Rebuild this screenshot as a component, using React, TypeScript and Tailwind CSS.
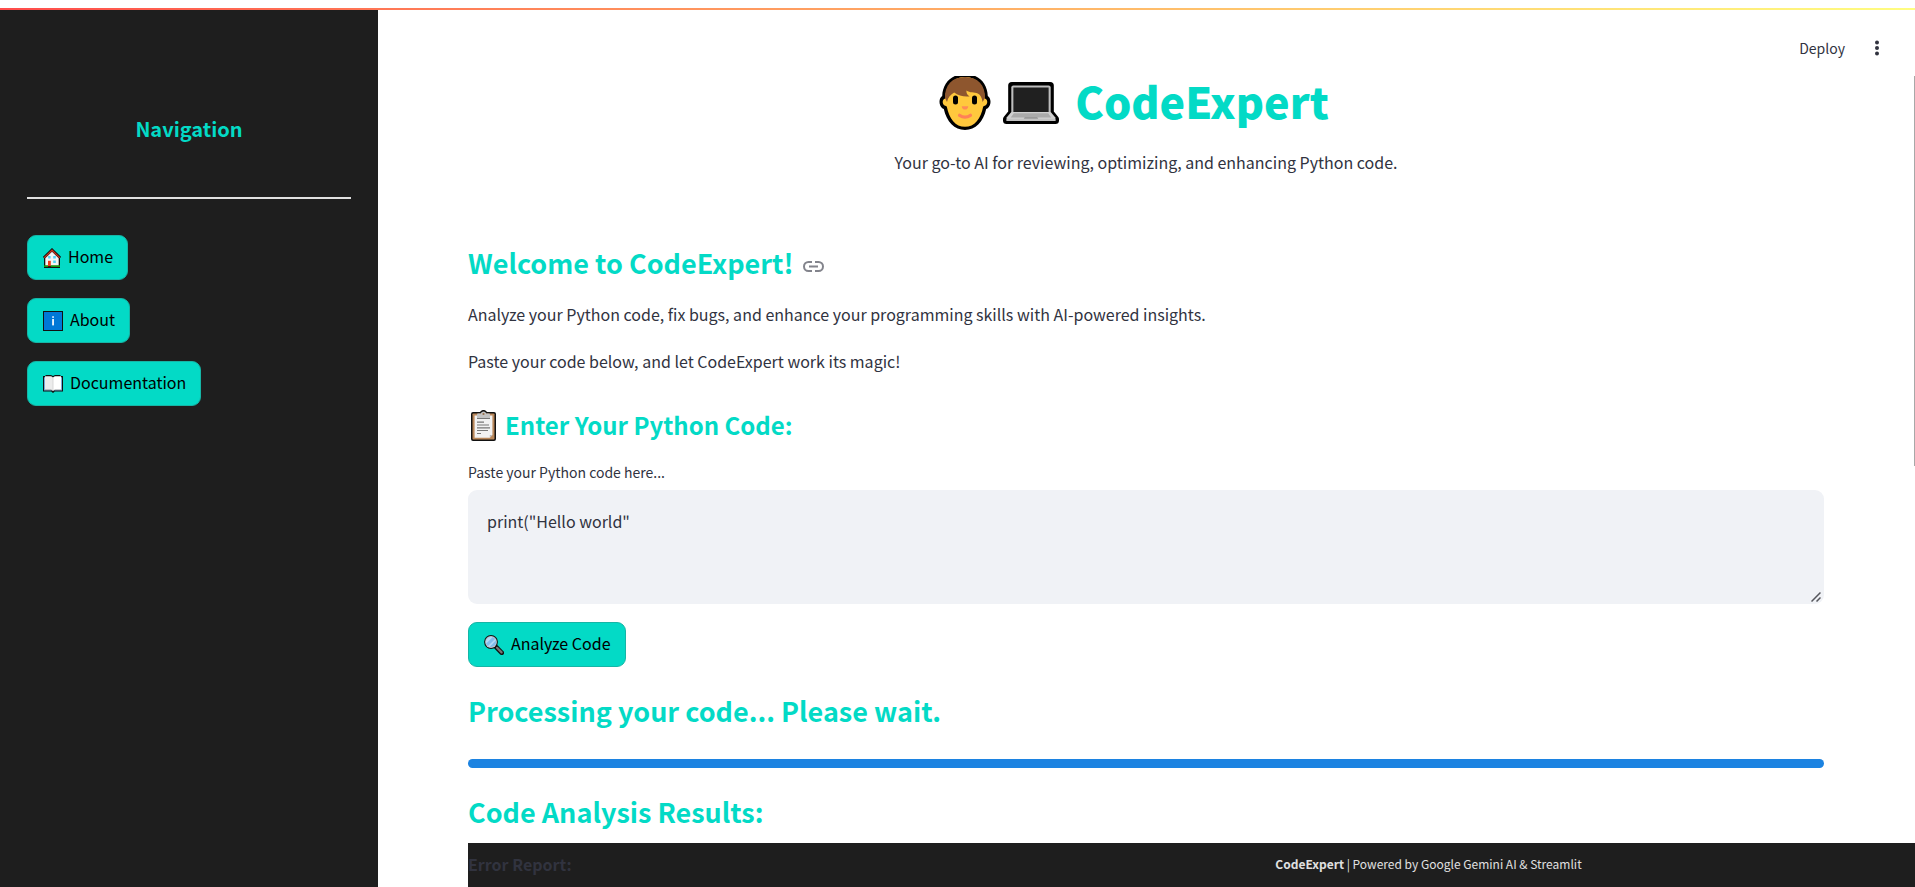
import React from "react";

const HomeIcon = () => (
  <svg viewBox="0 0 18 20" className="h-5 w-[18px] shrink-0" aria-hidden="true">
    <path d="M1 9.2V20h16V9.2L9 1.5z" fill="#111" />
    <path d="M1 10 9 2.2 17 10" fill="none" stroke="#111" strokeWidth="3.2" />
    <path d="M2.3 10.200V17.400h13.400V10.200L9 3.800z" fill="#f4f4f4" />
    <path d="M1.2 9.8 9 2.2l7.8 7.6" fill="none" stroke="#c8341c" strokeWidth="1.3" />
    <path d="M5.2 8h2.4v2.4H5.2zM10.2 8h2.6v2.4h-2.6zM10.2 12.6h2.6V15h-2.6z" fill="#4fd3f7" />
    <path d="M5 12.8h2.8v5.4H5z" fill="#f03a17" />
    <path d="M1 17.4h4v1.4H1zM7.8 17.4H17v1.4H7.8z" fill="#16c60c" />
  </svg>
);

const InfoIcon = () => (
  <svg viewBox="0 0 20 20" className="size-5 shrink-0" aria-hidden="true">
    <rect width="20" height="20" fill="#111" />
    <rect x="1" y="1" width="18" height="18" fill="#0078d7" />
    <rect x="9.2" y="8" width="1.7" height="6.4" fill="#fff" />
    <rect x="9.2" y="5.3" width="1.7" height="1.5" fill="#fff" />
  </svg>
);

const BookIcon = () => (
  <svg viewBox="0 0 20 18" className="h-[18px] w-5 shrink-0" aria-hidden="true">
    <path d="M0 1h2L3 0h5l2 1 2-1h5l1 1h2v15.6h-8.200L10 18l-1.800-1.400H0z" fill="#111" />
    <path d="M1 2.200h1v12.600h6L10 16l2-1.200h6V2.200h1v13.200H1z" fill="#76a9d8" />
    <path d="M2 1.200h6.200L10 2.400V15.800l-1.800-1H2z" fill="#ececec" />
    <path d="M18 1.200h-6.200L10 2.400V15.800l1.800-1H18z" fill="#fff" />
    <path d="M10 3v13" stroke="#d0d0d0" strokeWidth=".8" />
  </svg>
);

const MagnifierIcon = () => (
  <svg viewBox="0 0 20 20" className="size-5 shrink-0" aria-hidden="true">
    <path d="m12.200 12.200 5.600 5.600" stroke="#111" strokeWidth="4.600" strokeLinecap="round" />
    <path d="m13 12.800 4.600 4.600" stroke="#777" strokeWidth="2.200" strokeLinecap="round" />
    <circle cx="7" cy="7" r="6.900" fill="#111" />
    <circle cx="7" cy="7" r="5.900" fill="#c8c8d0" />
    <circle cx="7" cy="7" r="5.100" fill="#83beec" />
    <path d="M2.200 8.600A5.100 5.100 0 0 1 8.600 2.200zM4 11.100 11.100 4l.8 1.500-6.400 6.400z" fill="#b5dbf7" />
  </svg>
);

const ClipboardIcon = () => (
  <svg viewBox="0 0 25 31" className="h-[31px] w-[25px] shrink-0" aria-hidden="true">
    <path d="M2 2h7a4 4 0 0 1 7 0h7q2 0 2 2v25q0 2-2 2H2q-2 0-2-2V4q0-2 2-2z" fill="#111" />
    <rect x="1.500" y="3.500" width="22" height="26" rx=".8" fill="#b9875a" />
    <path d="M3.600 5.500h17.800V25l-2.600 2.800H3.600z" fill="#f2f2f2" />
    <path d="M18.800 27.800V25h2.600z" fill="#bbb" />
    <path d="M6 8.400V4.600q0-1 1-1h2.800a2.800 2.800 0 0 1 5.400 0H18q1 0 1 1v3.800z" fill="#c3c3c3" />
    <circle cx="12.500" cy="4" r="1.100" fill="#986f48" />
    <path d="M6 8.500h13" stroke="#777" />
    <path d="M6 12.200h7M6 15h12M6 17.800h13M6 20.500h11M6 23.500h4" stroke="#777" strokeWidth="1.200" />
  </svg>
);

const PersonIcon = () => (
  <svg viewBox="0 0 52 56" className="h-14 w-[52px] shrink-0" aria-hidden="true">
    <path
      d="M26 0C12.500 0 3.600 9 3.200 22 0 23.500-.8 31 3.200 34.200l1.600.8C7.500 47.500 15.500 56 26 56s18.500-8.500 21.200-21l1.600-.8C52.800 31 52 23.500 48.800 22 48.400 9 39.500 0 26 0z"
      fill="#000"
    />
    <path
      d="M26 3C14.500 3 6.600 11 6.200 24.400c-3.200.6-3.400 6 .1 7.400l1.500.6C10 44.500 16.500 52.800 26 52.800s16-8.300 18.200-20.400l1.500-.6c3.500-1.400 3.300-6.800.1-7.400C45.400 11 37.500 3 26 3z"
      fill="#ffc83d"
    />
    <path
      d="M26 3C13 3 5.600 11.500 6 24l2 4c1-4.400 3.600-7.400 7.200-9.400 4 3 9.500 4.400 15.400 3.800-2.200-1.400-3.400-3.600-3.200-6 3.400 2.600 8 1.400 11.400 3 2.800 1.400 4 4.200 4.800 8.600L46 24C46.400 11.500 39 3 26 3z"
      fill="#8e562e"
    />
    <rect x="14" y="21.500" width="5" height="9" rx="2.500" fill="#000" />
    <rect x="33" y="21.500" width="5" height="9" rx="2.500" fill="#000" />
    <path d="M22.700 32.200h6.600q-.5 3.400-3.300 3.400t-3.300-3.400z" fill="#ff8b57" />
    <path d="M20.500 41.300q5.500 3.600 11 0" fill="none" stroke="#ff8257" strokeWidth="3.200" strokeLinecap="round" />
  </svg>
);

const LaptopIcon = () => (
  <svg viewBox="0 0 54 42" preserveAspectRatio="none" className="mt-[2px] h-[42px] w-14 shrink-0" aria-hidden="true">
    <path
      d="M8.500 0h37q3.500 0 3.500 3.500V29.500l4.300 5.500q.7 1 .7 2v1.500q0 3.500-3.500 3.500h-47Q0 42 0 38.500V37q0-1 .7-2L5 29.500V3.500Q5 0 8.500 0z"
      fill="#000"
    />
    <path d="M10 3.500h34q2 0 2 2V30H8V5.500q0-2 2-2z" fill="#bdbdbd" />
    <rect x="10" y="5.500" width="34" height="24.500" fill="#202020" />
    <path d="M8 30h38l4.500 5.500V39h-47v-3.500z" fill="#cfcfcf" />
    <path d="M10.500 31.200h33l3 4.300h-39z" fill="#aaa" />
    <path d="M21 35h12l1 2H20z" fill="#999" />
    <path d="M3.500 36.800h47V39h-47z" fill="#c2c2c2" />
  </svg>
);

const LinkIcon = () => (
  <svg viewBox="0 0 21 11" className="h-[11px] w-[21px]" fill="none" stroke="#83848c" strokeWidth="2" aria-hidden="true">
    <path d="M9 1H5.500a4.500 4.500 0 0 0 0 9H9M12 1h3.500a4.500 4.500 0 0 1 0 9H12M6 5.500h9" />
  </svg>
);

function ActionButton({ icon, children }: { icon: React.ReactNode; children: React.ReactNode }) {
  return (
    <button
      type="button"
      className="flex h-[45px] cursor-pointer items-center gap-[7px] rounded-[9px] border border-[#16b5a6] bg-[#03dac6] pr-[14px] pl-[15px] text-[16px] leading-[26px] text-black"
    >
      {icon}
      <span className="pb-1">{children}</span>
    </button>
  );
}

export default function App() {
  return (
    <div className="flex h-screen flex-col overflow-hidden bg-white pt-2 font-['Noto_Sans_CJK_SC',sans-serif] text-[16px] leading-7 text-[#31333f]">
      <div className="h-[2px] shrink-0 bg-linear-to-r from-[#ff4b4b] to-[#fffd80]" />
      <div className="flex min-h-0 flex-1">
        <aside className="w-[378px] shrink-0 bg-[#1e1e1e] px-[27px] pt-[105px]">
          <h3 className="text-center text-[20px] leading-7 font-bold text-[#03dac6]">Navigation</h3>
          <hr className="mt-[54px] border-t-2 border-[#e0e0e0]" />
          <nav className="mt-9 flex flex-col items-start gap-[18px]">
            <ActionButton icon={<HomeIcon />}>Home</ActionButton>
            <ActionButton icon={<InfoIcon />}>About</ActionButton>
            <ActionButton icon={<BookIcon />}>Documentation</ActionButton>
          </nav>
        </aside>

        <main className="relative flex min-w-0 flex-1 flex-col overflow-hidden">
          <header className="flex h-[66px] shrink-0 items-center justify-end gap-[29px] pt-[9px] pr-[35px]">
            <button type="button" className="text-[14px] leading-5">Deploy</button>
            <button type="button" aria-label="Main menu">
              <svg viewBox="0 0 6 16" className="h-4 w-[6px]" fill="#31333f" aria-hidden="true">
                <circle cx="3" cy="2.500" r="2" />
                <circle cx="3" cy="8" r="2" />
                <circle cx="3" cy="13.500" r="2" />
              </svg>
            </button>
          </header>

          <footer className="absolute bottom-0 left-[90px] h-11 w-[calc(100vw+6px)] bg-[#1e1e1e] pt-[11px] text-center text-[12px] leading-5 text-[#e0e0e0]">
            <strong className="font-bold">CodeExpert</strong> | Powered by Google Gemini AI &amp; Streamlit
          </footer>

          <div className="relative min-h-0 flex-1 overflow-hidden pr-[91px] pl-[90px]">
            <h1 className="flex h-12 items-center justify-center pr-6 text-[43px] leading-[48px] font-black text-[#03dac6]">
              <span className="mr-4 flex items-center gap-3 pt-1">
                <PersonIcon />
                <LaptopIcon />
              </span>
              CodeExpert
            </h1>
            <p className="mt-6 text-center">Your go-to AI for reviewing, optimizing, and enhancing Python code.</p>

            <h2 className="mt-[67px] flex items-center gap-[10px] text-[27px] leading-10 font-bold text-[#03dac6]">
              Welcome to CodeExpert!
              <a href="#welcome" aria-label="Link to this section" className="pt-[6px]">
                <LinkIcon />
              </a>
            </h2>
            <p className="mt-[17px]">
              Analyze your Python code, fix bugs, and enhance your programming skills with AI-powered insights.
            </p>
            <p className="mt-[19px]">Paste your code below, and let CodeExpert work its magic!</p>

            <h3 className="mt-[34px] flex h-8 items-center gap-[9px] pl-[3px] text-[24px] leading-8 font-bold text-[#03dac6]">
              <ClipboardIcon />
              Enter Your Python Code:
            </h3>
            <label htmlFor="code" className="mt-[21px] block text-[14px] leading-5">
              Paste your Python code here...
            </label>
            <div className="relative mt-2">
              <textarea
                id="code"
                defaultValue={'print("Hello world"'}
                spellCheck={false}
                className="block h-[114px] w-full resize-none rounded-[9px] bg-[#f0f2f6] px-[19px] py-[17px] leading-7 outline-none"
              />
              <svg
                viewBox="0 0 10 10"
                className="pointer-events-none absolute right-[3px] bottom-[2px] size-[10px]"
                stroke="#55565c"
                strokeWidth="1.500"
                aria-hidden="true"
              >
                <path d="M.5 9.500 9.500.5M5.500 9.500l4-4" />
              </svg>
            </div>
            <div className="mt-[18px] flex">
              <ActionButton icon={<MagnifierIcon />}>Analyze Code</ActionButton>
            </div>

            <h2 className="mt-6 text-[27px] leading-10 font-bold text-[#03dac6]">Processing your code... Please wait.</h2>
            <div
              role="progressbar"
              aria-label="Analysis progress"
              aria-valuenow={100}
              className="mt-7 h-[9px] rounded-full bg-[#1c83e1]"
            />
            <h2 className="mt-6 text-[27px] leading-10 font-bold text-[#03dac6]">Code Analysis Results:</h2>
            <h4 className="mt-[18px] font-bold">Error Report:</h4>
            <div className="absolute top-0 right-0 h-[390px] w-px bg-[#a8a8a8]" />
          </div>
        </main>
      </div>
    </div>
  );
}
